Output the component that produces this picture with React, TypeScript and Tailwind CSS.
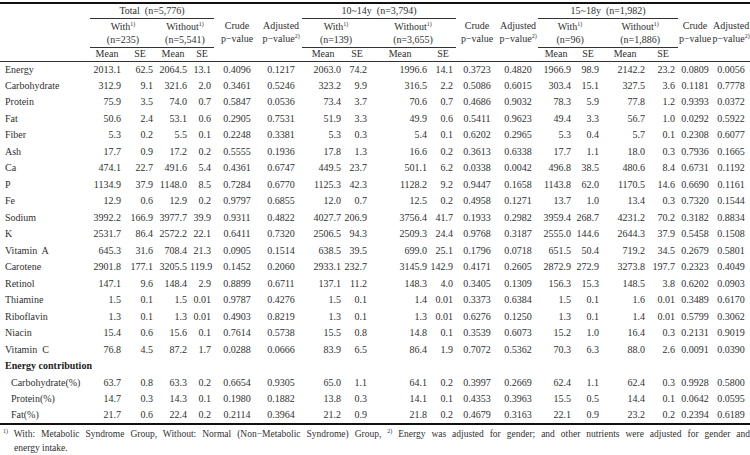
import React from 'react';

// [label, ...18 values] : Total / 10~14y / 15~18y  (With Mean, SE, Without Mean, SE, Crude p, Adjusted p)
const rows: string[][] = [
  ['Energy', '2013.1', '62.5', '2064.5', '13.1', '0.4096', '0.1217', '2063.0', '74.2', '1996.6', '14.1', '0.3723', '0.4820', '1966.9', '98.9', '2142.2', '23.2', '0.0809', '0.0056'],
  ['Carbohydrate', '312.9', '9.1', '321.6', '2.0', '0.3461', '0.5246', '323.2', '9.9', '316.5', '2.2', '0.5086', '0.6015', '303.4', '15.1', '327.5', '3.6', '0.1181', '0.7778'],
  ['Protein', '75.9', '3.5', '74.0', '0.7', '0.5847', '0.0536', '73.4', '3.7', '70.6', '0.7', '0.4686', '0.9032', '78.3', '5.9', '77.8', '1.2', '0.9393', '0.0372'],
  ['Fat', '50.6', '2.4', '53.1', '0.6', '0.2905', '0.7531', '51.9', '3.3', '49.9', '0.6', '0.5411', '0.9623', '49.4', '3.3', '56.7', '1.0', '0.0292', '0.5922'],
  ['Fiber', '5.3', '0.2', '5.5', '0.1', '0.2248', '0.3381', '5.3', '0.3', '5.4', '0.1', '0.6202', '0.2965', '5.3', '0.4', '5.7', '0.1', '0.2308', '0.6077'],
  ['Ash', '17.7', '0.9', '17.2', '0.2', '0.5555', '0.1936', '17.8', '1.3', '16.6', '0.2', '0.3613', '0.6338', '17.7', '1.1', '18.0', '0.3', '0.7936', '0.1665'],
  ['Ca', '474.1', '22.7', '491.6', '5.4', '0.4361', '0.6747', '449.5', '23.7', '501.1', '6.2', '0.0338', '0.0042', '496.8', '38.5', '480.6', '8.4', '0.6731', '0.1192'],
  ['P', '1134.9', '37.9', '1148.0', '8.5', '0.7284', '0.6770', '1125.3', '42.3', '1128.2', '9.2', '0.9447', '0.1658', '1143.8', '62.0', '1170.5', '14.6', '0.6690', '0.1161'],
  ['Fe', '12.9', '0.6', '12.9', '0.2', '0.9797', '0.6855', '12.0', '0.7', '12.5', '0.2', '0.4958', '0.1271', '13.7', '1.0', '13.4', '0.3', '0.7320', '0.1544'],
  ['Sodium', '3992.2', '166.9', '3977.7', '39.9', '0.9311', '0.4822', '4027.7', '206.9', '3756.4', '41.7', '0.1933', '0.2982', '3959.4', '268.7', '4231.2', '70.2', '0.3182', '0.8834'],
  ['K', '2531.7', '86.4', '2572.2', '22.1', '0.6411', '0.7320', '2506.5', '94.3', '2509.3', '24.4', '0.9768', '0.3187', '2555.0', '144.6', '2644.3', '37.9', '0.5458', '0.1508'],
  ['Vitamin  A', '645.3', '31.6', '708.4', '21.3', '0.0905', '0.1514', '638.5', '39.5', '699.0', '25.1', '0.1796', '0.0718', '651.5', '50.4', '719.2', '34.5', '0.2679', '0.5801'],
  ['Carotene', '2901.8', '177.1', '3205.5', '119.9', '0.1452', '0.2060', '2933.1', '232.7', '3145.9', '142.9', '0.4171', '0.2605', '2872.9', '272.9', '3273.8', '197.7', '0.2323', '0.4049'],
  ['Retinol', '147.1', '9.6', '148.4', '2.9', '0.8899', '0.6711', '137.1', '11.2', '148.3', '4.0', '0.3405', '0.1309', '156.3', '15.3', '148.5', '3.8', '0.6202', '0.0903'],
  ['Thiamine', '1.5', '0.1', '1.5', '0.01', '0.9787', '0.4276', '1.5', '0.1', '1.4', '0.01', '0.3373', '0.6384', '1.5', '0.1', '1.6', '0.01', '0.3489', '0.6170'],
  ['Riboflavin', '1.3', '0.1', '1.3', '0.01', '0.4903', '0.8219', '1.3', '0.1', '1.3', '0.01', '0.6276', '0.1250', '1.3', '0.1', '1.4', '0.01', '0.5799', '0.3062'],
  ['Niacin', '15.4', '0.6', '15.6', '0.1', '0.7614', '0.5738', '15.5', '0.8', '14.8', '0.1', '0.3539', '0.6073', '15.2', '1.0', '16.4', '0.3', '0.2131', '0.9019'],
  ['Vitamin  C', '76.8', '4.5', '87.2', '1.7', '0.0288', '0.0666', '83.9', '6.5', '86.4', '1.9', '0.7072', '0.5362', '70.3', '6.3', '88.0', '2.6', '0.0091', '0.0390'],
];

const contribution: string[][] = [
  ['Carbohydrate(%)', '63.7', '0.8', '63.3', '0.2', '0.6654', '0.9305', '65.0', '1.1', '64.1', '0.2', '0.3997', '0.2669', '62.4', '1.1', '62.4', '0.3', '0.9928', '0.5800'],
  ['Protein(%)', '14.7', '0.3', '14.3', '0.1', '0.1980', '0.1882', '13.8', '0.3', '14.1', '0.1', '0.4353', '0.3963', '15.5', '0.5', '14.4', '0.1', '0.0642', '0.0595'],
  ['Fat(%)', '21.7', '0.6', '22.4', '0.2', '0.2114', '0.3964', '21.2', '0.9', '21.8', '0.2', '0.4679', '0.3163', '22.1', '0.9', '23.2', '0.2', '0.2394', '0.6189'],
];

const groups = [
  { title: 'Total\u00a0\u00a0(n=5,776)', withN: '(n=235)', withoutN: '(n=5,541)' },
  { title: '10~14y\u00a0\u00a0(n=3,794)', withN: '(n=139)', withoutN: '(n=3,655)' },
  { title: '15~18y\u00a0\u00a0(n=1,982)', withN: '(n=96)', withoutN: '(n=1,886)' },
];

function Sup({ children }: { children: React.ReactNode }) {
  return <sup className="text-[6px] -top-[4px]">{children}</sup>;
}

function Cells({ values }: { values: string[] }) {
  return (
    <>
      {values.map((v, i) => {
        const isP = i % 6 === 4 || i % 6 === 5;
        return (
          <td key={i} className={isP ? 'text-center p-0 whitespace-nowrap' : 'text-right p-0 pr-[3px] whitespace-nowrap'}>
            {v}
          </td>
        );
      })}
    </>
  );
}

export default function App() {
  return (
    <div className="w-[750px] h-[455px] overflow-hidden bg-white pt-[2px] font-['Liberation_Serif','Times_New_Roman',serif] text-[10px] text-[#303030]">
      <table className="w-[750px] table-fixed border-collapse border-t-2 border-b-2 border-[#111]">
        <colgroup>
          <col className="w-[90px]" />
          {/* Total */}
          <col className="w-[34px]" />
          <col className="w-[32px]" />
          <col className="w-[34px]" />
          <col className="w-[24px]" />
          <col className="w-[46px]" />
          <col className="w-[42px]" />
          {/* 10~14y */}
          <col className="w-[42px]" />
          <col className="w-[26px]" />
          <col className="w-[60px]" />
          <col className="w-[26px]" />
          <col className="w-[42px]" />
          <col className="w-[40px]" />
          {/* 15~18y */}
          <col className="w-[36px]" />
          <col className="w-[28px]" />
          <col className="w-[46px]" />
          <col className="w-[30px]" />
          <col className="w-[34px]" />
          <col className="w-[38px]" />
        </colgroup>
        <thead>
          <tr className="h-[15px]">
            <th rowSpan={3} className="p-0 border-b border-[#333]" />
            {groups.map((g) => (
              <React.Fragment key={g.title}>
                <th colSpan={4} className="p-0 font-normal text-center border-b border-[#333] leading-none whitespace-nowrap">
                  {g.title}
                </th>
                <th colSpan={2} className="p-0" />
              </React.Fragment>
            ))}
          </tr>
          <tr className="h-[29px]">
            {groups.map((g) => (
              <React.Fragment key={g.title}>
                <th colSpan={2} className="p-0 pt-[1px] font-normal text-center align-top leading-[13px] border-b border-[#333] whitespace-nowrap">
                  With<Sup>1)</Sup>
                  <br />
                  {g.withN}
                </th>
                <th colSpan={2} className="p-0 pt-[1px] font-normal text-center align-top leading-[13px] border-b border-[#333] whitespace-nowrap">
                  Without<Sup>1)</Sup>
                  <br />
                  {g.withoutN}
                </th>
                <th rowSpan={2} className="p-0 pt-[1px] font-normal text-center align-top leading-[13px] border-b border-[#333] whitespace-nowrap">
                  Crude
                  <br />
                  p−value
                </th>
                <th rowSpan={2} className="p-0 pt-[1px] font-normal text-center align-top leading-[13px] border-b border-[#333] whitespace-nowrap">
                  Adjusted
                  <br />
                  p−value<Sup>2)</Sup>
                </th>
              </React.Fragment>
            ))}
          </tr>
          <tr className="h-[14px]">
            {groups.map((g) => (
              <React.Fragment key={g.title}>
                <th className="p-0 font-normal text-center leading-none border-b border-[#333]">Mean</th>
                <th className="p-0 font-normal text-center leading-none border-b border-[#333]">SE</th>
                <th className="p-0 font-normal text-center leading-none border-b border-[#333]">Mean</th>
                <th className="p-0 font-normal text-center leading-none border-b border-[#333]">SE</th>
              </React.Fragment>
            ))}
          </tr>
        </thead>
        <tbody className="leading-none">
          {rows.map((r) => (
            <tr key={r[0]} className="h-[16.5px]">
              <td className="p-0 pl-[5px] text-left whitespace-pre">{r[0]}</td>
              <Cells values={r.slice(1)} />
            </tr>
          ))}
          <tr className="h-[16.5px]">
            <td colSpan={19} className="p-0 pl-[5px] text-left font-bold text-[#222]">
              Energy contribution
            </td>
          </tr>
          {contribution.map((r) => (
            <tr key={r[0]} className="h-[16.5px]">
              <td className="p-0 pl-[11px] text-left whitespace-nowrap">{r[0]}</td>
              <Cells values={r.slice(1)} />
            </tr>
          ))}
        </tbody>
      </table>
      <div className="mt-[2px] pl-[14px] leading-[14px] text-[9.5px]">
        <div className="-ml-[11px] text-justify [text-align-last:justify]">
          <Sup>1)</Sup> With: Metabolic Syndrome Group, Without: Normal (Non−Metabolic Syndrome) Group, <Sup>2)</Sup> Energy was adjusted for gender; and other nutrients were adjusted for gender and
        </div>
        <div>energy intake.</div>
      </div>
    </div>
  );
}
